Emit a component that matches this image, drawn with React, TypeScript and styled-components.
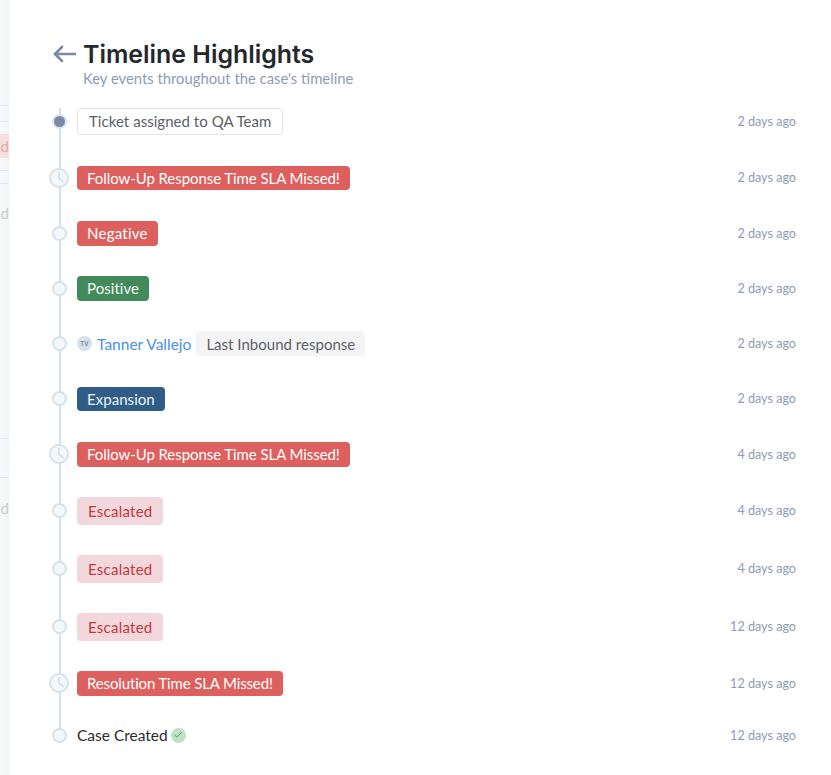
import React from "react";
import styled, { createGlobalStyle } from "styled-components";
import { LuCheck } from "react-icons/lu";

const GlobalStyle = createGlobalStyle`
  html, body { margin: 0; padding: 0; background: #fff; }
  body { font-family: "Lato", "Open Sans", sans-serif; overflow: hidden; }
`;

type Tone = "outline" | "danger" | "success" | "info" | "soft" | "muted";

const tones: Record<Tone, string> = {
  outline: "background:#fff;color:#5c5f66;border:1px solid #e2e4e8;letter-spacing:0.04px;",
  danger: "background:#dd5f5e;color:#fff;letter-spacing:-0.07px;",
  success: "background:#438a5a;color:#f2f7f3;letter-spacing:0.05px;",
  info: "background:#2f5d88;color:#eef3f8;letter-spacing:0.05px;",
  soft: "background:#f2d8dc;color:#c5363c;letter-spacing:0.25px;",
  muted: "background:#f4f4f5;color:#5c5f66;letter-spacing:0.02px;",
};

const Page = styled.div`
  width: 831px;
  height: 775px;
  display: flex;
  background: #fff;
`;

const Backdrop = styled.aside`
  width: 9px;
  height: 775px;
  flex: none;
  background: linear-gradient(90deg, #f8f9fa, #f2f4f5);
  overflow: hidden;
  display: flex;
  flex-direction: column;
`;

const BackRow = styled.div<{ $h: number; $line?: boolean; $tint?: boolean }>`
  box-sizing: border-box;
  height: ${(p) => p.$h}px;
  flex: none;
  display: flex;
  align-items: center;
  justify-content: flex-end;
  font-size: 15px;
  color: ${(p) => (p.$tint ? "#eba9a9" : "#c9ccd2")};
  background: ${(p) => (p.$tint ? "#f5dfe0" : "transparent")};
  border-bottom: ${(p) => (p.$line ? "1px solid #e3e6ec" : "none")};
`;

const Drawer = styled.main`
  flex: 1;
  min-width: 0;
  padding: 38px 35px 0 43px;
`;

const Header = styled.header`
  display: flex;
  align-items: flex-start;
  gap: 6px;
`;

const Back = styled.div`
  width: 26px;
  height: 32px;
  margin-left: -1px;
  display: flex;
  align-items: center;
  justify-content: center;
`;

const Title = styled.h1`
  margin: 0;
  font: 600 24.9px/32px "Inter", sans-serif;
  color: #25272c;
`;

const Subtitle = styled.p`
  margin: 0;
  font-size: 14.8px;
  line-height: 16px;
  color: #8f9bb3;
`;

const Timeline = styled.ol`
  list-style: none;
  margin: 21.6px 0 0;
  padding: 0;
  position: relative;
  display: flex;
  flex-direction: column;
  gap: 30.5px;

  &::before {
    content: "";
    position: absolute;
    left: 6.5px;
    top: 0;
    bottom: 6px;
    width: 2px;
    background: #d5e1ec;
  }
`;

const Row = styled.li`
  display: flex;
  align-items: center;
  position: relative;
  padding-left: 25px;
`;

const Marker = styled.span<{ $active?: boolean }>`
  position: absolute;
  left: 0;
  top: 50%;
  width: 15px;
  height: 15px;
  margin-top: -7.5px;
  box-sizing: border-box;
  border-radius: 50%;
  border: ${(p) => (p.$active ? "2.5px solid #dbe5ef" : "2.5px solid #d5e1ec")};
  background: ${(p) => (p.$active ? "#7b8aa3" : "#f5f8fb")};
`;

const ClockMark = styled.svg`
  position: absolute;
  left: -3px;
  top: 50%;
  margin-top: -10px;
  width: 20px;
  height: 20px;
`;

const Tag = styled.span<{ $tone: Tone; $tall?: boolean; $track?: number }>`
  box-sizing: border-box;
  display: inline-flex;
  align-items: center;
  height: ${(p) => (p.$tall ? 27.5 : 24.75)}px;
  padding: 0 ${(p) => (p.$tall ? 11 : 10)}px;
  border-radius: 4px;
  font-size: 15px;
  white-space: nowrap;
  ${(p) => tones[p.$tone]}
  ${(p) => (p.$track !== undefined ? `letter-spacing: ${p.$track}px;` : "")}
`;

const Avatar = styled.span`
  width: 15px;
  height: 15px;
  border-radius: 50%;
  background: #d5e1ec;
  color: #7d8087;
  font: 600 6px/15px "Inter", sans-serif;
  text-align: center;
  margin-right: 5px;
`;

const PersonName = styled.a`
  color: #4a90e2;
  font-size: 15.5px;
  margin-right: 5px;
`;

const Plain = styled.span`
  color: #2a2c30;
  font-size: 15.5px;
  line-height: 18px;
`;

const CheckBadge = styled.span`
  width: 15px;
  height: 15px;
  margin-left: 3px;
  border-radius: 50%;
  background: #bde3c6;
  color: #3f7d54;
  display: flex;
  align-items: center;
  justify-content: center;
  font-size: 10px;
`;

const When = styled.time`
  margin-left: auto;
  font-size: 12.6px;
  color: #8f9bb3;
`;

const Clock = () => (
  <ClockMark viewBox="0 0 20 20" fill="none">
    <circle cx="10" cy="10" r="9" fill="#f5f8fb" stroke="#d5e1ec" strokeWidth="2" />
    <path d="M10 4v6l4.5 4" stroke="#d5e1ec" strokeWidth="1.8" />
  </ClockMark>
);

const BackArrow = () => (
  <svg width="24" height="18" viewBox="0 0 24 18" fill="none" stroke="#7b8aa3" strokeWidth="2.6" strokeLinecap="round" strokeLinejoin="round">
    <path d="M23 9H3" />
    <path d="M10 2 3 9l7 7" />
  </svg>
);

const App: React.FC = () => (
  <Page>
    <GlobalStyle />
    <Backdrop>
      <BackRow $h={106} $line />
      <BackRow $h={16} $line />
      <BackRow $h={12} />
      <BackRow $h={24} $tint>d</BackRow>
      <BackRow $h={13} $line />
      <BackRow $h={13} $line />
      <BackRow $h={58}>d</BackRow>
      <BackRow $h={197} $line />
      <BackRow $h={39} $line />
      <BackRow $h={60}>d</BackRow>
    </Backdrop>
    <Drawer>
      <Header>
        <Back>
          <BackArrow />
        </Back>
        <div>
          <Title>Timeline Highlights</Title>
          <Subtitle>Key events throughout the case's timeline</Subtitle>
        </div>
      </Header>
      <Timeline>
        <Row>
          <Marker $active />
          <Tag $tone="outline" $tall>Ticket assigned to QA Team</Tag>
          <When>2 days ago</When>
        </Row>
        <Row>
          <Clock />
          <Tag $tone="danger">Follow-Up Response Time SLA Missed!</Tag>
          <When>2 days ago</When>
        </Row>
        <Row>
          <Marker />
          <Tag $tone="danger" $track={0.25}>Negative</Tag>
          <When>2 days ago</When>
        </Row>
        <Row>
          <Marker />
          <Tag $tone="success">Positive</Tag>
          <When>2 days ago</When>
        </Row>
        <Row>
          <Marker />
          <Avatar>TV</Avatar>
          <PersonName>Tanner Vallejo</PersonName>
          <Tag $tone="muted">Last Inbound response</Tag>
          <When>2 days ago</When>
        </Row>
        <Row>
          <Marker />
          <Tag $tone="info">Expansion</Tag>
          <When>2 days ago</When>
        </Row>
        <Row>
          <Clock />
          <Tag $tone="danger">Follow-Up Response Time SLA Missed!</Tag>
          <When>4 days ago</When>
        </Row>
        <Row>
          <Marker />
          <Tag $tone="soft" $tall>Escalated</Tag>
          <When>4 days ago</When>
        </Row>
        <Row>
          <Marker />
          <Tag $tone="soft" $tall>Escalated</Tag>
          <When>4 days ago</When>
        </Row>
        <Row>
          <Marker />
          <Tag $tone="soft" $tall>Escalated</Tag>
          <When>12 days ago</When>
        </Row>
        <Row>
          <Clock />
          <Tag $tone="danger" $track={-0.14}>Resolution Time SLA Missed!</Tag>
          <When>12 days ago</When>
        </Row>
        <Row>
          <Marker />
          <Plain>Case Created</Plain>
          <CheckBadge>
            <LuCheck />
          </CheckBadge>
          <When>12 days ago</When>
        </Row>
      </Timeline>
    </Drawer>
  </Page>
);

export default App;
